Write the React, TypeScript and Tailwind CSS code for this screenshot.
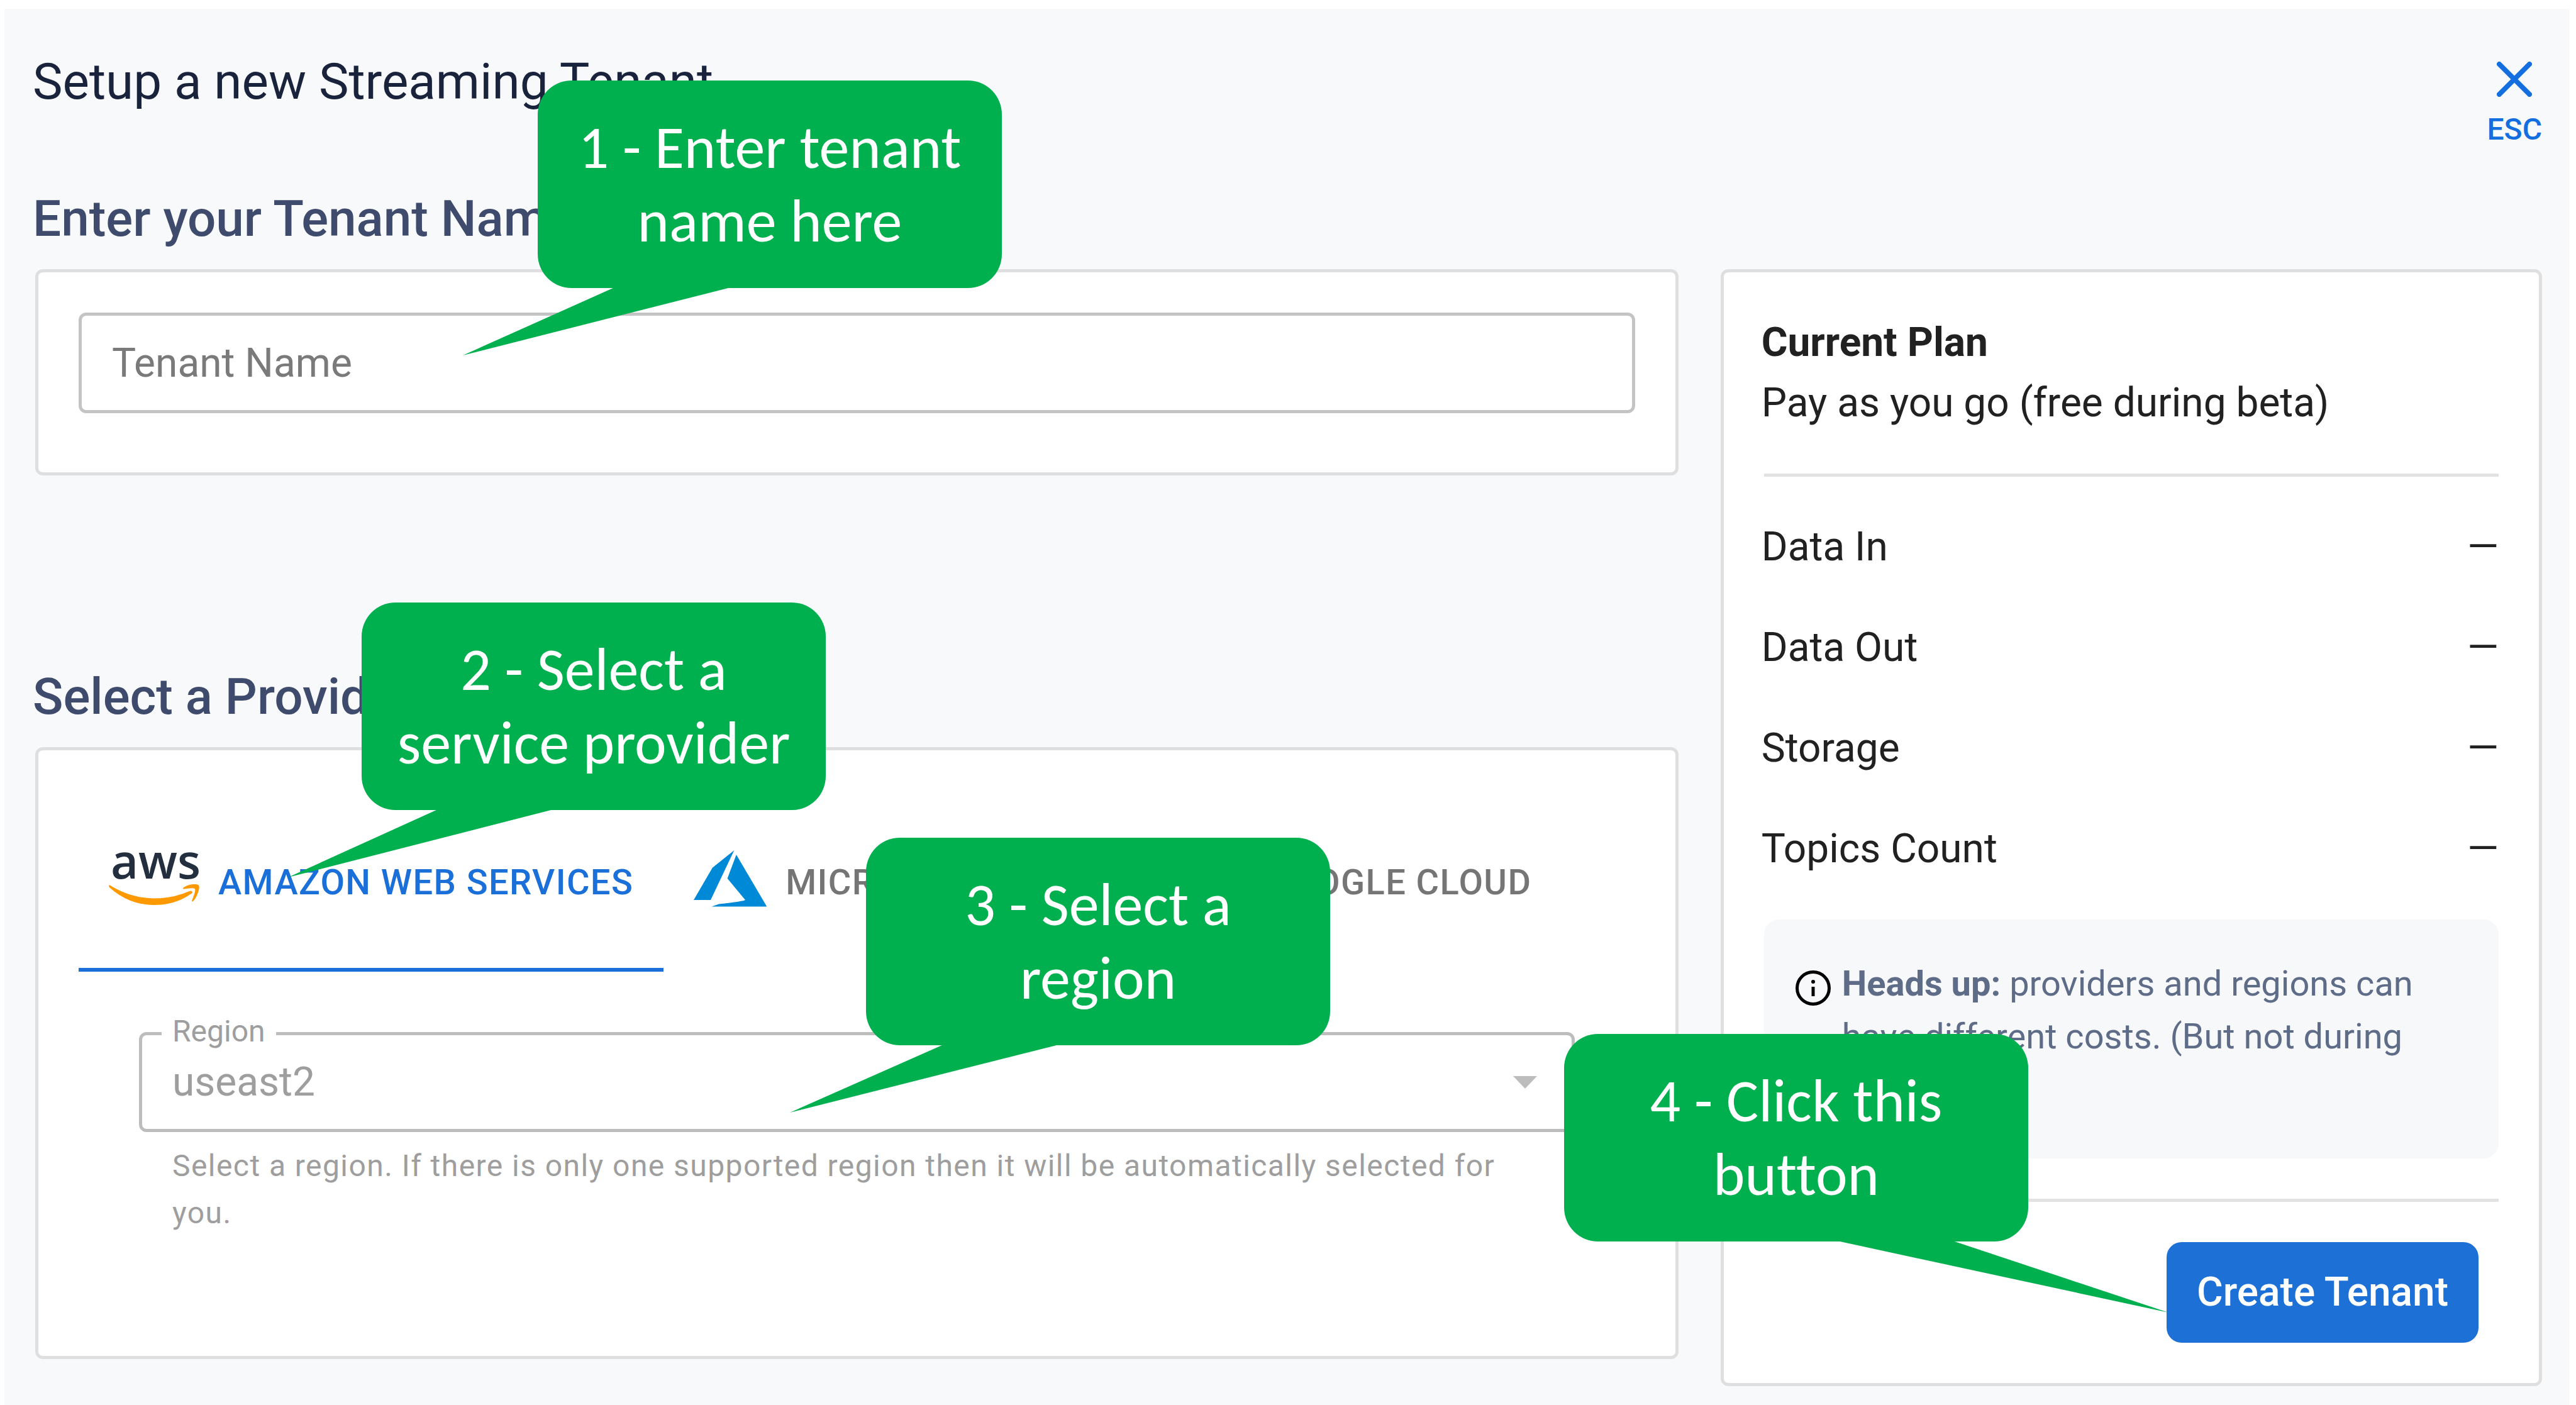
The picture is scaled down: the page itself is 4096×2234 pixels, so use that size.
import React from "react";

type CalloutProps = {
  className: string;
  lines: [string, string];
  pointer: string;
};

function Callout({ className, lines, pointer }: CalloutProps) {
  return (
    <div
      className={`absolute flex h-[330px] w-[738px] items-center justify-center rounded-[54px] bg-[#00b04f] text-center font-[Carlito,Lato,sans-serif] text-[96px] leading-[117px] text-white [font-variant-ligatures:none] ${className}`}
    >
      <p>
        {lines[0]}
        <br />
        {lines[1]}
      </p>
      <svg className="absolute top-full left-0 h-[120px] w-full overflow-visible" aria-hidden="true">
        <polygon points={pointer} fill="#00b04f" />
      </svg>
    </div>
  );
}

function AwsLogo() {
  return (
    <svg className="mb-3 h-[90px] w-[144px] shrink-0 overflow-visible normal-case" viewBox="0 0 144 90" aria-hidden="true">
      <text x="3" y="45" fontFamily="Open Sans, sans-serif" fontSize="76" fontWeight="600" letterSpacing="0" fill="#232f3e">
        aws
      </text>
      <path
        d="M0 57C0 55 2 55 4 57Q36 76 72 76.500Q102 76.500 128 65C132 63 135 67 131 69Q106 87 72 87Q32 87 1 59Z"
        fill="#ff9900"
      />
      <path
        d="M118 60C124 55 134 53 141 54.500C145 55.500 144 61 142 67C140 73 137 78 134 81C132.500 82 131.500 81 132.500 79C135 73 138.500 64 137 61.500C135 59 125 60.500 119 61.500C117.500 61.500 117.500 60.500 118 60Z"
        fill="#ff9900"
      />
    </svg>
  );
}

function AzureLogo() {
  return (
    <svg className="mb-3 h-[90px] w-[116px] shrink-0" viewBox="0 0 116 90" aria-hidden="true">
      <path d="M64.400 0L29.800 27.800L0 79H27Z" fill="#0089d6" />
      <path d="M67.800 7L53.600 44.800L82 79Q80 81 40 85.500L28.400 89.500H116.300Z" fill="#0089d6" />
    </svg>
  );
}

function GoogleCloudLogo() {
  return (
    <svg className="mb-3 h-[90px] w-[116px] shrink-0" viewBox="0 0 112 90" aria-hidden="true">
      <path d="M71 25L81 15C62-3 26-1 17 30L30 28Q34 17 47 14Q61 12 71 25Z" fill="#ea4335" />
      <path d="M95 30Q92 20 81 13L67 27Q75 33 75 44C94 44 94 71 75 71H56V90H75C110 90 124 47 95 30Z" fill="#4285f4" />
      <path d="M28 90H56V71H28Q23 71 20 69L6 83Q15 90 28 90Z" fill="#34a853" />
      <path d="M28 26C-6 26-10 68 10 84L24 69C10 63 17 43 28 44Q36 46 39 53L53 39Q44 26 28 26Z" fill="#fbbc05" />
    </svg>
  );
}

const providers = [
  { name: "Amazon Web Services", Logo: AwsLogo },
  { name: "Microsoft Azure", Logo: AzureLogo },
  { name: "Google Cloud", Logo: GoogleCloudLogo },
];

const usage = ["Data In", "Data Out", "Storage", "Topics Count"];

export default function App() {
  return (
    <div className="relative min-h-screen overflow-hidden bg-white pt-[14px] pr-[11px] pl-[7px] font-[Roboto,sans-serif] text-[64px] leading-[96px] text-[#212121]">
      <main className="min-h-[calc(100vh-14px)] bg-[#f8f9fb] pr-[43px] pb-[27px] pl-[45px]">
        <header className="flex items-start justify-between pt-14">
          <h1 className="text-[80px] leading-[120px] text-[#1a233c]">Setup a new Streaming Tenant</h1>
          <button type="button" className="mt-7 flex flex-col items-center text-[48px] leading-[64px] font-medium text-[#136fdf]">
            <svg className="mb-5 size-14" viewBox="0 0 56 56" aria-hidden="true">
              <path d="M4 4L52 52M52 4L4 52" stroke="currentColor" strokeWidth="8" strokeLinecap="round" />
            </svg>
            ESC
          </button>
        </header>

        <div className="mt-[50px] grid grid-cols-[667fr_333fr] items-start gap-x-[67px]">
          <div>
            <h2 className="text-[80px] leading-[120px] font-medium text-[#3f4b6c]">
              <label htmlFor="tenant-name">Enter your Tenant Name</label>
            </h2>
            <section className="mt-5 ml-1 rounded-xl border-[5px] border-[#dfdfdf] bg-white px-16 pt-16 pb-[94px]">
              <input
                id="tenant-name"
                type="text"
                placeholder="Tenant Name"
                className="block h-[160px] w-full rounded-xl border-[5px] border-[#c4c4c4] bg-white px-12 placeholder:text-[#7a7a7a] placeholder:opacity-100"
              />
            </section>

            <h2 className="mt-[292px] text-[80px] leading-[120px] font-medium text-[#3f4b6c]">Select a Provider</h2>
            <section className="mt-5 ml-1 rounded-xl border-[5px] border-[#dfdfdf] bg-white px-16 pt-16 pb-[190px]">
              <div role="tablist" className="flex">
                {providers.map(({ name, Logo }, index) => (
                  <button
                    key={name}
                    type="button"
                    role="tab"
                    aria-selected={index === 0}
                    className="flex h-72 items-center gap-[30px] border-y-6 border-transparent px-12 pt-1 text-[56px] font-medium tracking-wide text-[#757575] uppercase aria-selected:border-b-[#1a6fd8] aria-selected:text-[#1a6fd8]"
                  >
                    <Logo />
                    {name}
                  </button>
                ))}
              </div>

              <div className="mx-24 mt-24">
                <div className="relative">
                  <select
                    id="region"
                    disabled
                    className="block h-[159px] w-full appearance-none rounded-xl border-[5px] border-[#bdbdbd] bg-white px-12 text-[#9e9e9e] opacity-100"
                  >
                    <option>useast2</option>
                  </select>
                  <label htmlFor="region" className="absolute -top-[29px] left-9 bg-white px-[17px] text-[48px] leading-[56px] text-[#9e9e9e]">
                    Region
                  </label>
                  <svg className="pointer-events-none absolute top-[70px] right-15 h-5 w-[38px]" viewBox="0 0 38 20" aria-hidden="true">
                    <path d="M0 0H38L19 20Z" fill="#bdbdbd" />
                  </svg>
                </div>
                <p className="mt-4 pr-16 pl-[53px] text-[48px] leading-[75px] tracking-[0.03em] text-[#9e9e9e]">
                  Select a region. If there is only one supported region then it will be automatically selected for you.
                </p>
              </div>
            </section>
          </div>

          <aside className="mt-[140px] rounded-xl border-[5px] border-[#dfdfdf] bg-white pt-16 pr-16 pb-16 pl-[60px]">
            <h3 className="font-bold">Current Plan</h3>
            <p>Pay as you go (free during beta)</p>
            <hr className="mt-16 ml-1 border-t-[5px] border-[#e2e2e2]" />
            <dl className="mt-16 flex flex-col gap-16">
              {usage.map((item) => (
                <div key={item} className="flex justify-between">
                  <dt>{item}</dt>
                  <dd>—</dd>
                </div>
              ))}
            </dl>
            <div className="mt-16 ml-1 flex items-start gap-[14px] rounded-3xl bg-[#f7f8fa] pt-[60px] pr-12 pb-[68px] pl-[46px] text-[56px] leading-[84px] text-[#5e6c88]">
              <svg className="mt-[17px] size-16 shrink-0 text-black" viewBox="0 0 64 64" fill="none" aria-hidden="true">
                <circle cx="32" cy="32" r="25.500" stroke="currentColor" strokeWidth="5" />
                <path d="M32 30V45" stroke="currentColor" strokeWidth="5" />
                <circle cx="32" cy="22" r="3" fill="currentColor" />
              </svg>
              <p>
                <b className="font-bold">Heads up:</b> providers and regions can have different costs. (But not during beta)
              </p>
            </div>
            <hr className="mt-16 ml-1 border-t-[5px] border-[#e2e2e2]" />
            <div className="mt-16 mr-8 flex justify-end">
              <button type="button" className="h-[160px] rounded-3xl bg-[#1d70d6] px-12 font-medium text-white">
                Create Tenant
              </button>
            </div>
          </aside>
        </div>
      </main>

      <Callout className="top-[128px] left-[855px]" lines={["1 - Enter tenant", "name here"]} pointer="122,-1 307,-1 -119,107" />
      <Callout className="top-[958px] left-[575px]" lines={["2 - Select a", "service provider"]} pointer="121,-1 305,-1 -117,107" />
      <Callout className="top-[1332px] left-[1377px]" lines={["3 - Select a", "region"]} pointer="123,-1 307,-1 -121,107" />
      <Callout className="top-[1644px] left-[2487px]" lines={["4 - Click this", "button"]} pointer="434,-1 618,-1 961,113" />
    </div>
  );
}
